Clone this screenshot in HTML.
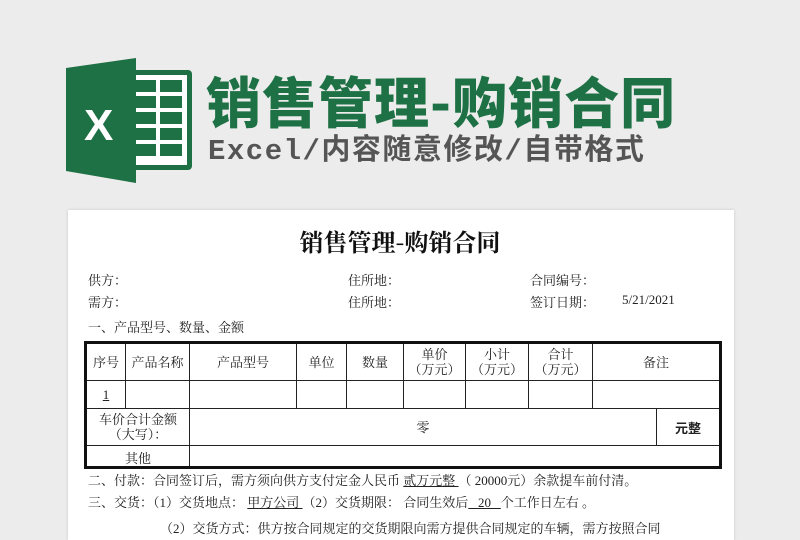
<!DOCTYPE html>
<html><head><meta charset="utf-8"><style>
body{margin:0;width:800px;height:526px;background:#ececec;position:relative;overflow:hidden;font-family:"Liberation Serif","Noto Serif CJK SC",serif;}
.a{position:absolute;white-space:nowrap;}
.paper{position:absolute;left:68px;top:210px;width:666px;height:330px;background:#fff;box-shadow:0 0 3px rgba(0,0,0,.15);}
.t{font-size:13px;color:#222;}
table{position:absolute;left:84px;top:341px;width:635px;table-layout:fixed;border-collapse:collapse;border:3px solid #111;font-size:13px;}
td{border:1px solid #222;text-align:center;padding:0;line-height:15px;color:#222;}
</style></head><body>
<svg class="a" style="left:64px;top:58px" width="130" height="125" viewBox="0 0 130 125">
<rect x="50" y="12" width="78" height="100" rx="4" fill="#1e7145"/>
<rect x="55" y="17" width="68" height="90" fill="#fff"/>
<g fill="#1e7145">
<rect x="72" y="22" width="20" height="12"/><rect x="96" y="22" width="22" height="12"/>
<rect x="72" y="38" width="20" height="12"/><rect x="96" y="38" width="22" height="12"/>
<rect x="72" y="54" width="20" height="12"/><rect x="96" y="54" width="22" height="12"/>
<rect x="72" y="70" width="20" height="12"/><rect x="96" y="70" width="22" height="12"/>
<rect x="72" y="86" width="20" height="12"/><rect x="96" y="86" width="22" height="12"/>
</g>
<path d="M2 10 L72 0 L72 125 L2 113 Z" fill="#1e7145"/>
<text x="20" y="82" font-family="Liberation Sans" font-weight="bold" font-size="44" fill="#fff">X</text>
</svg>
<div class="a" style="left:206px;top:64px;font-family:'Noto Sans CJK SC',sans-serif;font-weight:900;font-size:55px;color:#1e7145;letter-spacing:1px;line-height:70px">销售管理-购销合同</div>
<div class="a" style="left:208px;top:132px;font-family:'Liberation Mono','Noto Sans CJK SC',sans-serif;font-size:29px;letter-spacing:1.5px;color:#555;line-height:40px;font-weight:bold">Excel/内容随意修改/自带格式</div>
<div class="paper"></div>
<div class="a" style="left:0;width:800px;text-align:center;top:226px;font-size:24px;font-weight:bold;color:#111;line-height:30px;font-family:'Noto Serif CJK SC',serif">销售管理-购销合同</div>
<div class="a t" style="left:88px;top:270px">供方：</div>
<div class="a t" style="left:348px;top:270px">住所地：</div>
<div class="a t" style="left:530px;top:270px">合同编号：</div>
<div class="a t" style="left:88px;top:292px">需方：</div>
<div class="a t" style="left:348px;top:292px">住所地：</div>
<div class="a t" style="left:530px;top:292px">签订日期：</div>
<div class="a t" style="left:622px;top:292px">5/21/2021</div>
<div class="a t" style="left:88px;top:317px">一、产品型号、数量、金额</div>
<table>
<colgroup><col style="width:40px"><col style="width:64px"><col style="width:107px"><col style="width:50px"><col style="width:57px"><col style="width:62px"><col style="width:63px"><col style="width:64px"><col style="width:64px"><col style="width:64px"></colgroup>
<tr style="height:38px"><td>序号</td><td>产品名称</td><td>产品型号</td><td>单位</td><td>数量</td><td>单价<br>（万元）</td><td>小计<br>（万元）</td><td>合计<br>（万元）</td><td colspan="2">备注</td></tr>
<tr style="height:28px"><td><u>1</u></td><td></td><td></td><td></td><td></td><td></td><td></td><td></td><td colspan="2"></td></tr>
<tr style="height:37px"><td colspan="2">车价合计金额<br>（大写）：</td><td colspan="7">零</td><td style="font-weight:bold;font-family:'Noto Sans CJK SC',sans-serif">元整</td></tr>
<tr style="height:22px"><td colspan="2" style="vertical-align:bottom">其他</td><td colspan="8"></td></tr>
</table>
<div class="a t" style="left:88px;top:470px">二、付款：合同签订后，需方须向供方支付定金人民币 <u>贰万元整 </u>（ 20000元）余款提车前付清。</div>
<div class="a t" style="left:88px;top:492px">三、交货：（1）交货地点： <u> 甲方公司 </u> （2）交货期限： 合同生效后<u>&nbsp;&nbsp; 20 &nbsp;&nbsp;</u>个工作日左右 。</div>
<div class="a t" style="left:160px;top:518px">（2）交货方式：供方按合同规定的交货期限向需方提供合同规定的车辆，需方按照合同</div>
</body></html>
